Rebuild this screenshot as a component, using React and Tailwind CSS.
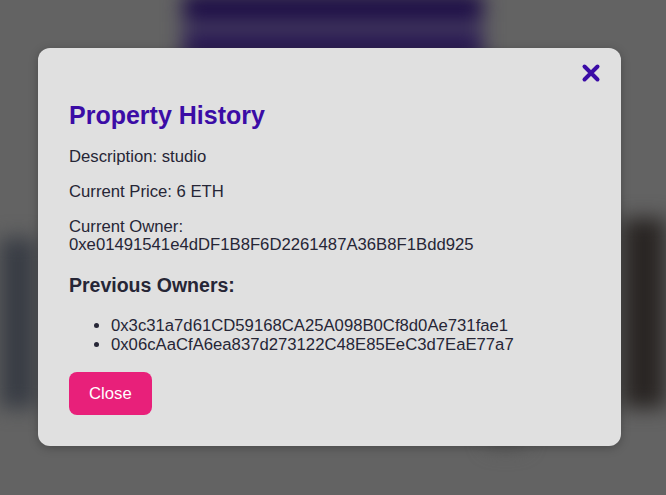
import React from 'react';

const previousOwners = [
  '0x3c31a7d61CD59168CA25A098B0Cf8d0Ae731fae1',
  '0x06cAaCfA6ea837d273122C48E85EeC3d7EaE77a7',
];

function CloseIcon() {
  return (
    <svg width="20" height="20" viewBox="0 0 20 20" fill="none">
      <path d="M3.5 3.5 L16.5 16.5 M16.5 3.5 L3.5 16.5" stroke="#3b0ca6" strokeWidth="4" strokeLinecap="round" />
    </svg>
  );
}

export default function App() {
  return (
    <div className="relative w-[666px] h-[495px] overflow-hidden bg-[#636363]" style={{ fontFamily: '"Liberation Sans", Arial, sans-serif' }}>
      {/* blurred page behind the modal */}
      <div className="flex flex-col h-full blur-[10px]">
        <div className="flex justify-center -mt-[6px]">
          <div className="w-[300px] flex flex-col">
            <div className="h-[26px] bg-[#1a0a45]" />
            <div className="h-[16px] bg-[#4a4262]" />
            <div className="h-[22px] bg-[#1f0d4e]" />
          </div>
        </div>
        <div className="flex justify-between mt-[170px]">
          <div className="w-[36px] h-[170px] mt-[10px] bg-[#383c44]" />
          <div className="w-[44px] h-[190px] -mt-[10px] bg-[#2a2624]" />
        </div>
        <div className="flex justify-end pr-[140px] mt-[20px]">
          <div className="w-[40px] h-[20px] rounded-full bg-[#555555]" />
        </div>
      </div>

      {/* modal overlay */}
      <div className="absolute inset-0 pl-[38px] pt-[48px]">
        <div className="w-[583px] h-[398px] rounded-[12px] bg-[#e0e0e0] shadow-[0_2px_10px_rgba(0,0,0,0.25)] pl-[31px] pr-[20px] pt-[12px] pb-[32px] text-[#262636]">
          <div className="flex justify-end">
            <button className="w-[20px] h-[24px] flex items-center justify-center mt-[1px]">
              <CloseIcon />
            </button>
          </div>
          <h2 className="mt-[16px] text-[25px] leading-[29px] font-bold text-[#3b0ca6]">Property History</h2>
          <p className="mt-[17px] text-[16.7px] leading-[19px]">Description: studio</p>
          <p className="mt-[16px] text-[16.7px] leading-[19px]">Current Price: 6 ETH</p>
          <p className="mt-[17px] text-[16.7px] leading-[18px]">
            Current Owner:
            <br />
            0xe01491541e4dDF1B8F6D2261487A36B8F1Bdd925
          </p>
          <h3 className="mt-[20px] text-[19.5px] leading-[22px] font-bold">Previous Owners:</h3>
          <ul className="mt-[20px] list-disc pl-[42px] text-[16.7px] leading-[19px]">
            {previousOwners.map((owner) => (
              <li key={owner}>{owner}</li>
            ))}
          </ul>
          <button className="mt-[18px] h-[43px] px-[20px] rounded-[8px] bg-[#e8207a] text-white text-[16.7px]">
            Close
          </button>
        </div>
      </div>
    </div>
  );
}
